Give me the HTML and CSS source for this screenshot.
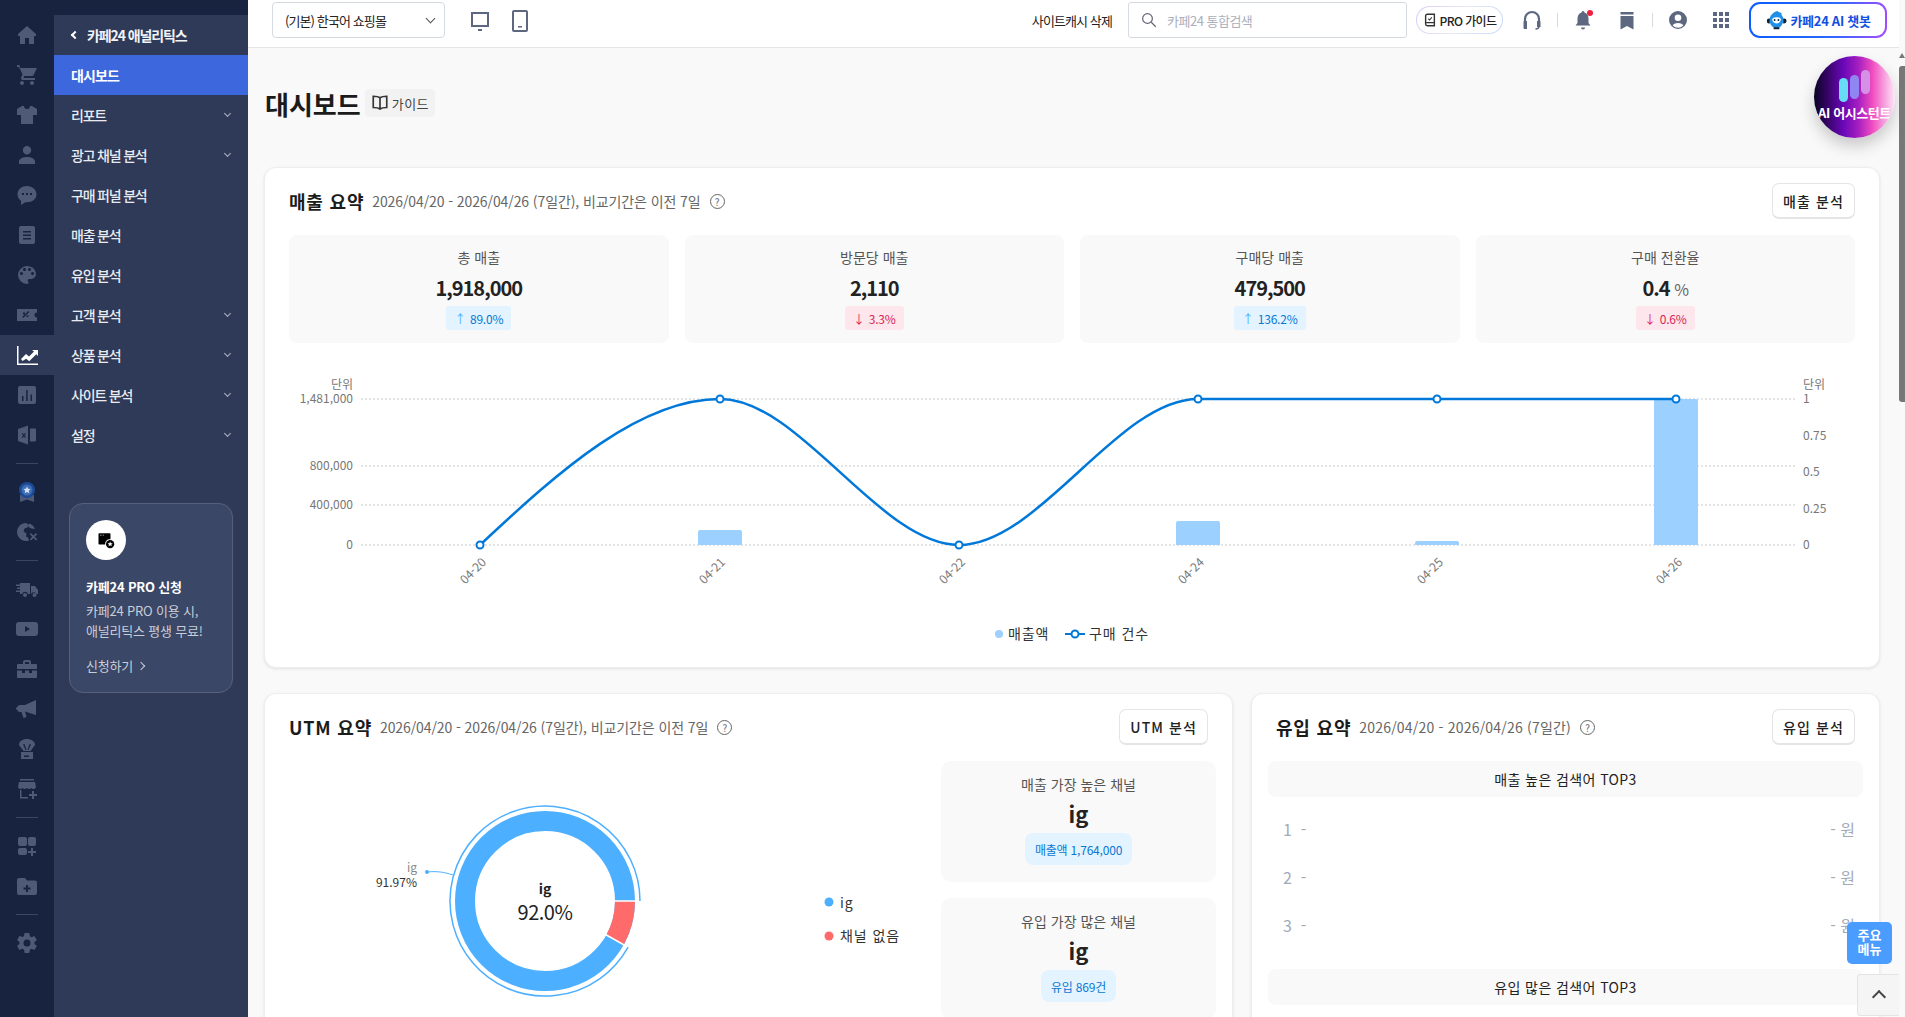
FILE: index.html
```html
<!DOCTYPE html>
<html lang="ko">
<head>
    <meta charset="UTF-8">
    <title>대시보드</title>
    <link rel="stylesheet" href="styles.css">
</head>
<body>
    <nav class="rail">
        <a class="rail-item"><svg viewBox="0 0 24 24"><path d="M12 3 3 11v2h2v8h5v-6h4v6h5v-8h2v-2z"/></svg></a>
        <a class="rail-item"><svg viewBox="0 0 24 24"><path d="M7 18c-1.100 0-2 .9-2 2s.9 2 2 2 2-.9 2-2-.9-2-2-2zM2 2v2h2l3.600 7.600-1.400 2.400c-.7 1.400.3 3 1.800 3h12v-2H8.400l1-2h7.500c.7 0 1.400-.4 1.700-1L22 5H5.300l-.9-3zm15 16c-1.100 0-2 .9-2 2s.9 2 2 2 2-.9 2-2-.9-2-2-2z"/></svg></a>
        <a class="rail-item"><svg viewBox="0 0 24 24"><path d="M7 3 2 6v6h4v9h12v-9h4V6l-5-3h-2a3 3 0 0 1-6 0z"/></svg></a>
        <a class="rail-item"><svg viewBox="0 0 24 24"><path d="M12 11.500a4.200 4.200 0 1 0 0-8.400 4.200 4.200 0 0 0 0 8.400zM12 14c-4.500 0-8 2-8 4.500V21h16v-2.500C20 16 16.500 14 12 14z"/></svg></a>
        <a class="rail-item"><svg viewBox="0 0 24 24"><path fill-rule="evenodd" d="M12 3c-5.500 0-9.500 3.500-9.500 8.300 0 2.700 1.300 5 3.500 6.500V22l4.300-2.800c.5.100 1.100.1 1.700.1 5.500 0 9.500-3.500 9.500-8S17.500 3 12 3zM7 10h2v2H7zm4 0h2v2h-2zm4 0h2v2h-2z"/></svg></a>
        <a class="rail-item"><svg viewBox="0 0 24 24"><path fill-rule="evenodd" d="M6 3h12a2 2 0 0 1 2 2v14a2 2 0 0 1-2 2H6a2 2 0 0 1-2-2V5a2 2 0 0 1 2-2zm2 5v1.500h8V8zm0 3.500V13h8v-1.500zM8 15v1.500h8V15z"/></svg></a>
        <a class="rail-item"><svg viewBox="0 0 24 24"><path d="M12 3a9 9 0 0 0 0 18c.830 0 1.500-.670 1.500-1.500 0-.390-.150-.740-.390-1.010-.230-.260-.380-.610-.380-.990 0-.830.670-1.500 1.500-1.500H16c2.760 0 5-2.240 5-5 0-4.420-4.030-8-9-8zm-5.500 9c-.830 0-1.500-.670-1.500-1.500S5.670 9 6.500 9 8 9.670 8 10.500 7.330 12 6.500 12zm3-4C8.670 8 8 7.330 8 6.500S8.670 5 9.500 5s1.500.670 1.500 1.500S10.330 8 9.500 8zm5 0c-.830 0-1.500-.670-1.500-1.500S13.670 5 14.500 5s1.500.670 1.500 1.500S15.330 8 14.500 8zm3 4c-.830 0-1.500-.670-1.500-1.500S16.670 9 17.500 9s1.500.670 1.500 1.500-.670 1.500-1.500 1.500z"/></svg></a>
        <a class="rail-item"><svg viewBox="0 0 24 24"><path fill-rule="evenodd" d="M2 6h20v3.500a2.500 2.500 0 0 0 0 5V18H2zm6 3.500v2h2v-2zm3.500 4.500v-1.500h2V14zm-3.300 1 6.100-6-1-.9-6.100 6z"/></svg></a>
        <a class="rail-item active"><svg viewBox="0 0 24 24"><path d="M2 3h1.500v17.500H23V22H2zM6 16l5-5 3 2.500 5-5-2-1.500h6v6l-1.700-1.800-7.100 7-3-2.500L7.500 18z"/></svg></a>
        <a class="rail-item"><svg viewBox="0 0 24 24"><path fill-rule="evenodd" d="M5 3h14a2 2 0 0 1 2 2v14a2 2 0 0 1-2 2H5a2 2 0 0 1-2-2V5a2 2 0 0 1 2-2zm2 10v5h1.500v-5zm4.200-6v11h1.500V7zm4.300 4.500V18H17v-6.500z"/></svg></a>
        <a class="rail-item"><svg viewBox="0 0 24 24"><path fill-rule="evenodd" d="M3 6l10-3.500v19L3 18zm4.500 4-.8.800 1.400 1.700-1.400 1.700.8.800 1.300-1.500 1.300 1.500.8-.8-1.400-1.700 1.400-1.700-.8-.8-1.300 1.500zM15 5.500h5a1 1 0 0 1 1 1v11a1 1 0 0 1-1 1h-5z"/></svg></a>
        <div class="rail-line"></div>
        <a class="rail-item"><svg viewBox="0 0 24 24"><path fill="#4e5a76" d="M5 15h14v7l-7-2.500L5 22z"/><circle cx="12" cy="10" r="8" fill="#1d4a94"/><circle cx="12" cy="10" r="5.500" fill="#3f6db5"/><path fill="#cfe0f5" d="m12 6.500 1.100 2.300 2.500.3-1.800 1.700.5 2.500-2.300-1.200-2.300 1.200.5-2.500-1.800-1.700 2.500-.3z"/></svg></a>
        <a class="rail-item"><svg viewBox="0 0 24 24"><path d="M11 3a9 9 0 1 0 3 17.500l-1-3-2-1 .5-3-3-2 1-3 3-1 1-3zm3 .5-1 3 3 2 4 .5a9 9 0 0 0-6-5.500z"/><path d="m16 13 2.500 2.500L21 13l1.200 1.200-2.500 2.500 2.500 2.500-1.200 1.200-2.500-2.500-2.500 2.500-1.200-1.200 2.500-2.500-2.500-2.500z"/></svg></a>
        <div class="rail-line"></div>
        <a class="rail-item"><svg viewBox="0 0 24 24"><path d="M5 6h10v11h-2a3 3 0 0 0-5.800 0H5v-2H1v-1.500h4V12H2v-1.500h3V9H1V7.500h4zm11 3h4l3 4v4h-1.500a3 3 0 0 0-5.500 0zM10 16a2 2 0 1 1 0 4 2 2 0 0 1 0-4zm9.500 0a2 2 0 1 1 0 4 2 2 0 0 1 0-4z"/></svg></a>
        <a class="rail-item"><svg viewBox="0 0 24 24"><path fill-rule="evenodd" d="M4 5h16a3 3 0 0 1 3 3v8a3 3 0 0 1-3 3H4a3 3 0 0 1-3-3V8a3 3 0 0 1 3-3zm6 4v6l5-3z"/></svg></a>
        <a class="rail-item"><svg viewBox="0 0 24 24"><path fill-rule="evenodd" d="M8 7V5a2 2 0 0 1 2-2h4a2 2 0 0 1 2 2v2h5a1 1 0 0 1 1 1v4H2V8a1 1 0 0 1 1-1zm2-2v2h4V5zM2 13.500h5V16h3v-2.500h4V16h3v-2.500h5V20a1 1 0 0 1-1 1H3a1 1 0 0 1-1-1z"/></svg></a>
        <a class="rail-item"><svg viewBox="0 0 24 24"><path d="M21 3v15l-11-3.500 1.500 5.500-3 1-2-6H5a3 3 0 0 1-3-2.500H1v-2h1A3 3 0 0 1 5 8h5z"/></svg></a>
        <a class="rail-item"><svg viewBox="0 0 24 24"><path fill-rule="evenodd" d="M12 2c-4.500 0-8 2.500-8 6l4.500 6h7L20 8c0-3.500-3.500-6-8-6zM8 7.500l2.500 5.500h1L9.500 7zm8 0-2.500 5.500h-1L14.500 7zM6 15h12v7H6zm3 3.500V20h5v-1.500z"/></svg></a>
        <a class="rail-item"><svg viewBox="0 0 24 24"><path d="M5 2h14v1.500H5zM4 5h16l1 5a2.500 2.500 0 0 1-4.500 1 3 3 0 0 1-4.500 0 3 3 0 0 1-4.500 0A2.500 2.500 0 0 1 3 10zm1 8h1.500v7H13v1.500H5zm12 1h2v3h3v2h-3v3h-2v-3h-3v-2h3z"/></svg></a>
        <div class="rail-line"></div>
        <a class="rail-item"><svg viewBox="0 0 24 24"><path d="M5 3h5a2 2 0 0 1 2 2v5a2 2 0 0 1-2 2H5a2 2 0 0 1-2-2V5a2 2 0 0 1 2-2zm10 0h4a2 2 0 0 1 2 2v5a2 2 0 0 1-2 2h-4a2 2 0 0 1-2-2V5a2 2 0 0 1 2-2zM5 14h5a2 2 0 0 1 2 2v3a2 2 0 0 1-2 2H5a2 2 0 0 1-2-2v-3a2 2 0 0 1 2-2zm11 0h2v3h3v2h-3v3h-2v-3h-3v-2h3z"/></svg></a>
        <a class="rail-item"><svg viewBox="0 0 24 24"><path fill-rule="evenodd" d="M4 4h6l2 2.500h8a2 2 0 0 1 2 2V19a2 2 0 0 1-2 2H4a2 2 0 0 1-2-2V6a2 2 0 0 1 2-2zm7 7v2.500H8.500v2H11V18h2v-2.500h2.500v-2H13V11z"/></svg></a>
        <div class="rail-line"></div>
        <a class="rail-item"><svg viewBox="0 0 24 24"><path d="M19.400 13c.040-.330.100-.650.100-1s-.060-.670-.100-1l2.100-1.600c.200-.150.250-.420.120-.650l-2-3.400c-.120-.220-.390-.300-.610-.220l-2.500 1c-.520-.400-1.080-.730-1.690-.980L14.400 2.400c-.040-.240-.250-.420-.500-.420h-4c-.250 0-.460.180-.490.420l-.380 2.650c-.610.250-1.170.590-1.690.980l-2.500-1c-.230-.090-.490 0-.610.220l-2 3.400c-.130.220-.070.490.120.650L4.500 11c-.040.330-.100.660-.100 1s.060.670.100 1l-2.100 1.600c-.200.150-.250.420-.120.650l2 3.400c.120.220.390.300.610.220l2.500-1c.520.400 1.080.730 1.690.980l.380 2.650c.030.240.240.420.490.420h4c.250 0 .460-.180.490-.420l.380-2.650c.610-.250 1.170-.590 1.690-.980l2.500 1c.230.090.490 0 .610-.220l2-3.400c.120-.220.070-.490-.120-.650zM12 15.500a3.500 3.500 0 1 1 0-7 3.500 3.500 0 0 1 0 7z"/></svg></a>
    </nav>

    <aside class="sidenav">
        <div class="nav-title"><i class="nav-back"></i>카페24 애널리틱스</div>
        <a class="nav-item current">대시보드</a>
        <a class="nav-item">리포트<i class="caret"></i></a>
        <a class="nav-item">광고 채널 분석<i class="caret"></i></a>
        <a class="nav-item">구매 퍼널 분석</a>
        <a class="nav-item">매출 분석</a>
        <a class="nav-item">유입 분석</a>
        <a class="nav-item">고객 분석<i class="caret"></i></a>
        <a class="nav-item">상품 분석<i class="caret"></i></a>
        <a class="nav-item">사이트 분석<i class="caret"></i></a>
        <a class="nav-item">설정<i class="caret"></i></a>

        <div class="promo">
            <div class="promo-icon">
                <svg viewBox="0 0 24 24" width="18" height="18"><path d="M3 3h14a1 1 0 0 1 1 1v7a6 6 0 0 0-7 7H3a1 1 0 0 1-1-1V4a1 1 0 0 1 1-1z"/><circle cx="17.500" cy="17.500" r="5.500"/><path fill="#fff" d="m17.500 14 1 2.200 2.400.2-1.800 1.600.6 2.400-2.200-1.300-2.200 1.300.6-2.400-1.800-1.600 2.400-.2zM4 5h1v1H4zm2 0h1v1H6zm2 0h1v1H8z"/></svg>
            </div>
            <div class="promo-title">카페24 PRO 신청</div>
            <p class="promo-desc">카페24 PRO 이용 시,<br>애널리틱스 평생 무료!</p>
            <div class="promo-link">신청하기 <i class="promo-arrow"></i></div>
        </div>
    </aside>

    <div class="main">
        <header class="topbar">
            <div class="shop-select">(기본) 한국어 쇼핑몰<i class="caret dark"></i></div>
            <svg class="device" viewBox="0 0 24 24" width="24" height="24"><path fill="none" stroke="#5d6780" stroke-width="2" d="M4 4h16v13H4z"/><path fill="#5d6780" d="M10 20h4v2h-4z"/></svg>
            <svg class="device" viewBox="0 0 24 24" width="24" height="24"><rect x="5" y="2" width="14" height="20" rx="1" fill="none" stroke="#5d6780" stroke-width="2"/><path fill="#5d6780" d="M10 17h4v1.500h-4z"/></svg>
            <div class="topbar-right">
                <span class="cache-btn">사이트캐시 삭제</span>
                <div class="search">
                    <svg viewBox="0 0 24 24" width="18" height="18"><circle cx="10" cy="10" r="6.500" fill="none" stroke="#667" stroke-width="1.600"/><path stroke="#667" stroke-width="1.600" d="m15 15 6 6"/></svg>
                    <span>카페24 통합검색</span>
                </div>
                <div class="pro-guide">
                    <svg viewBox="0 0 16 16" width="14" height="14"><path fill="none" stroke="#333" stroke-width="1.600" d="M5 1.500h8v13H5a2 2 0 0 1-2-2v-9a2 2 0 0 1 2-2z"/><path stroke="#333" stroke-width="1.200" fill="none" d="M3.500 11h9M6 6.500l1.500 1.500L10 5"/></svg>
                    PRO 가이드
                </div>
                <svg class="tool" viewBox="0 0 24 24" width="24" height="24"><path fill="none" stroke="#5d6780" stroke-width="2.200" d="M5 14v-3a7 7 0 0 1 14 0v3"/><path fill="none" stroke="#5d6780" stroke-width="1.500" d="M19 18c0 2-1.500 3-3.500 3"/><path fill="#5d6780" d="M3.500 14a1 1 0 0 1 1-1H7v8H4.500a1 1 0 0 1-1-1zM17 13h2.500a1 1 0 0 1 1 1v5h-3.500z"/></svg>
                <i class="tool-line"></i>
                <span class="bell">
                    <svg class="tool" viewBox="0 0 24 24" width="24" height="24"><path fill="#5d6780" d="M12 3a1.500 1.500 0 0 1 1.500 1.500c3 1 4 3.500 4 6.500v4l2 2.500h-15l2-2.500v-4c0-3 1-5.500 4-6.500A1.500 1.500 0 0 1 12 3zM10 19.500h4a2 2 0 0 1-4 0z"/></svg>
                    <i class="bell-dot"></i>
                </span>
                <svg class="tool" viewBox="0 0 24 24" width="24" height="24"><path fill="#5d6780" d="M5.500 4h13v2.500h-13zm0 4h13v13.500L12 18l-6.500 3.500z"/></svg>
                <i class="tool-line"></i>
                <svg class="tool person" viewBox="0 0 24 24" width="24" height="24"><path fill="#5d6780" fill-rule="evenodd" d="M12 3a9 9 0 1 1 0 18 9 9 0 0 1 0-18zm0 3.500a3.300 3.300 0 1 0 0 6.600 3.300 3.300 0 0 0 0-6.600zm0 8.500c-2.700 0-4.800 1-5.300 2.500a7.500 7.500 0 0 0 10.600 0C16.800 16 14.700 15 12 15z"/></svg>
                <svg class="tool" viewBox="0 0 24 24" width="24" height="24"><path fill="#5d6780" d="M4 4h4v4H4zm6 0h4v4h-4zm6 0h4v4h-4zM4 10h4v4H4zm6 0h4v4h-4zm6 0h4v4h-4zM4 16h4v4H4zm6 0h4v4h-4zm6 0h4v4h-4z"/></svg>
                <div class="chatbot">
                    <svg viewBox="0 0 24 24" width="23" height="23"><path fill="#1f8fe8" d="M13 2c1 1.500 3 2 4.500 2-.5 1-.5 1.500 0 2.500 1.500 2 2 4 1.500 6.500-.8 4-3.500 7-7 7s-6.500-3-7-7C4 8 7.500 3.500 13 2z"/><path fill="#fff" d="M7.500 11c0-1.500 1.500-2.500 4.500-2.500s4.500 1 4.500 2.500-1.500 4-4.500 4-4.500-2.500-4.500-4z"/><circle cx="10" cy="11.500" r="1" fill="#123"/><circle cx="14" cy="11.500" r="1" fill="#123"/><path fill="#123" d="M2 12a2 2 0 0 1 2-2h1v5H4a2 2 0 0 1-2-2zm17-2h1a2 2 0 0 1 0 5h-1zM9 19h6v2H9z"/></svg>
                    카페24 AI 챗봇
                </div>
            </div>
        </header>

        <div class="content">
            <div class="page-head">
                <h1>대시보드</h1>
                <a class="guide-btn">
                    <svg viewBox="0 0 24 24" width="18" height="18"><path fill="none" stroke="#333" stroke-width="2.200" d="M12 5c-2-1.500-5-2-9-2v15c4 0 7 .5 9 2 2-1.500 5-2 9-2V3c-4 0-7 .5-9 2zm0 0v15"/></svg>
                    가이드
                </a>
            </div>

            <section class="card sales-card">
                <div class="card-head">
                    <h2>매출 요약</h2>
                    <span class="period">2026/04/20 - 2026/04/26 (7일간), 비교기간은 이전 7일</span>
                    <i class="help">?</i>
                    <a class="outline-btn">매출 분석</a>
                </div>
                <div class="stats">
                    <div class="stat">
                        <div class="stat-label">총 매출</div>
                        <div class="stat-value">1,918,000</div>
                        <span class="delta up"><b>↑</b> 89.0%</span>
                    </div>
                    <div class="stat">
                        <div class="stat-label">방문당 매출</div>
                        <div class="stat-value">2,110</div>
                        <span class="delta down"><b>↓</b> 3.3%</span>
                    </div>
                    <div class="stat">
                        <div class="stat-label">구매당 매출</div>
                        <div class="stat-value">479,500</div>
                        <span class="delta up"><b>↑</b> 136.2%</span>
                    </div>
                    <div class="stat">
                        <div class="stat-label">구매 전환율</div>
                        <div class="stat-value">0.4 <small>%</small></div>
                        <span class="delta down"><b>↓</b> 0.6%</span>
                    </div>
                </div>

                <svg class="sales-chart" viewBox="289 375 1566 280" width="1566" height="280">
                    <g class="grid">
                        <path d="M361 399H1796M361 466H1796M361 505H1796M361 545H1796"/>
                    </g>
                    <g fill="#9bd0ff">
                        <path d="M698 545v-13a2 2 0 0 1 2-2h40a2 2 0 0 1 2 2v13z"/>
                        <path d="M1176 545v-22a2 2 0 0 1 2-2h40a2 2 0 0 1 2 2v22z"/>
                        <path d="M1415 545v-2a2 2 0 0 1 2-2h40a2 2 0 0 1 2 2v2z"/>
                        <path d="M1654 545V401a2 2 0 0 1 2-2h40a2 2 0 0 1 2 2v144z"/>
                    </g>
                    <path class="line" d="M480 545C560 470 640 399 720 399C800 399 880 545 959 545C1039 545 1118 399 1198 399H1676"/>
                    <g class="dots">
                        <circle cx="480" cy="545" r="3.500"/>
                        <circle cx="720" cy="399" r="3.500"/>
                        <circle cx="959" cy="545" r="3.500"/>
                        <circle cx="1198" cy="399" r="3.500"/>
                        <circle cx="1437" cy="399" r="3.500"/>
                        <circle cx="1676" cy="399" r="3.500"/>
                    </g>
                    <g class="axis-left">
                        <text x="353" y="389">단위</text>
                        <text x="353" y="403">1,481,000</text>
                        <text x="353" y="470">800,000</text>
                        <text x="353" y="509">400,000</text>
                        <text x="353" y="549">0</text>
                    </g>
                    <g class="axis-right">
                        <text x="1803" y="389">단위</text>
                        <text x="1803" y="403">1</text>
                        <text x="1803" y="440">0.75</text>
                        <text x="1803" y="476">0.5</text>
                        <text x="1803" y="513">0.25</text>
                        <text x="1803" y="549">0</text>
                    </g>
                    <g class="axis-x">
                        <text transform="translate(487 563) rotate(-45)">04-20</text>
                        <text transform="translate(726 563) rotate(-45)">04-21</text>
                        <text transform="translate(966 563) rotate(-45)">04-22</text>
                        <text transform="translate(1205 563) rotate(-45)">04-24</text>
                        <text transform="translate(1444 563) rotate(-45)">04-25</text>
                        <text transform="translate(1683 563) rotate(-45)">04-26</text>
                    </g>
                    <circle cx="999" cy="634" r="4" fill="#9bd0ff"/>
                    <text class="legend-text" x="1008" y="639">매출액</text>
                    <path d="M1065 634h20" stroke="#0078d9" stroke-width="2"/>
                    <circle class="legend-dot" cx="1075" cy="634" r="3.500"/>
                    <text class="legend-text" x="1089" y="639">구매 건수</text>
                </svg>
            </section>

            <div class="bottom-row">
                <section class="card utm-card">
                    <div class="card-head">
                        <h2>UTM 요약</h2>
                        <span class="period">2026/04/20 - 2026/04/26 (7일간), 비교기간은 이전 7일</span>
                        <i class="help">?</i>
                        <a class="outline-btn">UTM 분석</a>
                    </div>
                    <div class="utm-body">
                        <svg class="donut" viewBox="289 761 652 256" width="652" height="256">
                            <circle cx="545" cy="901" r="80" fill="none" stroke="#4dafff" stroke-width="20"/>
                            <path d="M625 901A80 80 0 0 1 615 939.800" fill="none" stroke="#ff6b6b" stroke-width="20"/>
                            <path d="M614 901h22M605.500 934.500 625 945.500" stroke="#fff" stroke-width="1.500"/>
                            <path d="M628.100 947.100A95 95 0 1 1 640 901" fill="none" stroke="#4dafff" stroke-width="1.500"/>
                            <path d="M427 872c10-1 17 0 26 3" fill="none" stroke="#4dafff"/>
                            <circle cx="427" cy="872" r="2" fill="#4dafff"/>
                            <text class="pie-name" x="417" y="872">ig</text>
                            <text class="pie-pct" x="417" y="887">91.97%</text>
                            <text class="center-name" x="545" y="894">ig</text>
                            <text class="center-pct" x="545" y="920">92.0%</text>
                            <circle cx="829" cy="902" r="4.500" fill="#4dafff"/>
                            <text class="legend-text" x="840" y="908">ig</text>
                            <circle cx="829" cy="936" r="4.500" fill="#ff6b6b"/>
                            <text class="legend-text" x="840" y="941">채널 없음</text>
                        </svg>
                        <div class="utm-side">
                            <div class="best">
                                <div class="stat-label">매출 가장 높은 채널</div>
                                <div class="best-name">ig</div>
                                <span class="best-tag">매출액 1,764,000</span>
                            </div>
                            <div class="best">
                                <div class="stat-label">유입 가장 많은 채널</div>
                                <div class="best-name">ig</div>
                                <span class="best-tag">유입 869건</span>
                            </div>
                        </div>
                    </div>
                </section>

                <section class="card inflow-card">
                    <div class="card-head">
                        <h2>유입 요약</h2>
                        <span class="period">2026/04/20 - 2026/04/26 (7일간)</span>
                        <i class="help">?</i>
                        <a class="outline-btn">유입 분석</a>
                    </div>
                    <div class="keywords">
                        <div class="keyword-head">매출 높은 검색어 TOP3</div>
                        <ul class="keyword-list">
                            <li><span>1 &nbsp;-</span><span>- 원</span></li>
                            <li><span>2 &nbsp;-</span><span>- 원</span></li>
                            <li><span>3 &nbsp;-</span><span>- 원</span></li>
                        </ul>
                        <div class="keyword-head">유입 많은 검색어 TOP3</div>
                    </div>
                </section>
            </div>
        </div>

        <a class="ai-assist">
            <span class="ai-bars"><i></i><i></i><i></i></span>
            <span class="ai-text">AI 어시스턴트</span>
        </a>
        <a class="quick-menu">주요<br>메뉴</a>
        <a class="to-top"><i></i></a>
    </div>

    <div class="scrollbar"><i class="scroll-up"></i><i class="scroll-thumb"></i></div>
</body>
</html>
```

FILE: styles.css
```css
* {
    box-sizing: border-box;
}

body {
    margin: 0;
    height: 100vh;
    display: flex;
    overflow: hidden;
    background: #f9f9f9;
    color: #222;
    font-family: "Noto Sans CJK KR", "Noto Sans", sans-serif;
    font-size: 14px;
}

h1, h2, p, ul {
    margin: 0;
    padding: 0;
}

/* left icon rail */
.rail {
    width: 54px;
    flex: none;
    padding-top: 15px;
    background: #17233f;
}

.rail-item {
    height: 40px;
    display: flex;
    align-items: center;
    justify-content: center;
}

.rail-item svg {
    width: 24px;
    height: 24px;
    fill: #4e5a76;
}

.rail-item.active {
    background: #2e3a58;
}

.rail-item.active svg {
    fill: #fff;
}

.rail-line {
    height: 1px;
    margin: 8px 16px;
    background: #3b4662;
}

/* second level menu */
.sidenav {
    width: 194px;
    flex: none;
    padding-top: 15px;
    background: linear-gradient(#17233f 15px, #2e3a58 15px);
}

.nav-title {
    height: 40px;
    display: flex;
    align-items: center;
    padding-left: 16px;
    color: #f1f3f7;
    font-weight: 700;
    letter-spacing: -1.100px;
}

.nav-back {
    width: 6px;
    height: 6px;
    margin: 0 9px 0 2px;
    border-left: 2px solid #fff;
    border-bottom: 2px solid #fff;
    transform: rotate(45deg);
}

.nav-item {
    height: 40px;
    display: flex;
    align-items: center;
    justify-content: space-between;
    padding: 0 17px;
    color: #e9ebf1;
    font-weight: 500;
    letter-spacing: -1.200px;
}

.nav-item.current {
    background: #3c67dd;
    color: #fff;
    font-weight: 700;
    letter-spacing: -0.900px;
}

.caret {
    width: 5px;
    height: 5px;
    margin: -3px 1px 0 0;
    border-right: 1px solid #aeb4c4;
    border-bottom: 1px solid #aeb4c4;
    transform: rotate(45deg);
}

.caret.dark {
    width: 7px;
    height: 7px;
    border-color: #555;
}

.promo {
    height: 190px;
    margin: 48px 15px 0;
    padding: 16px;
    background: #3b4766;
    border: 1px solid #55607f;
    border-radius: 14px;
    color: #c9cdd8;
    font-size: 13px;
    letter-spacing: -0.200px;
}

.promo-icon {
    width: 40px;
    height: 40px;
    display: flex;
    align-items: center;
    justify-content: center;
    background: #fff;
    border-radius: 50%;
}

.promo-title {
    margin-top: 17px;
    color: #fff;
    font-weight: 700;
    line-height: 20px;
    letter-spacing: -0.200px;
}

.promo-desc {
    margin-top: 4px;
    line-height: 20px;
}

.promo-link {
    margin-top: 15px;
    line-height: 20px;
}

.promo-arrow {
    display: inline-block;
    width: 6px;
    height: 6px;
    margin: 0 0 2px 2px;
    border-top: 1px solid #c9cdd8;
    border-right: 1px solid #c9cdd8;
    transform: rotate(45deg);
}

/* main column */
.main {
    flex: 1;
    min-width: 0;
    display: flex;
    flex-direction: column;
    position: relative;
}

.topbar {
    height: 48px;
    flex: none;
    display: flex;
    align-items: flex-start;
    padding: 2px 12px 0 24px;
    background: #fff;
    border-bottom: 1px solid #e2e4e8;
}

.shop-select {
    width: 173px;
    height: 36px;
    display: flex;
    align-items: center;
    justify-content: space-between;
    padding: 0 9px 0 12px;
    background: #fff;
    border: 1px solid #d5d9e2;
    border-radius: 4px;
    font-size: 13px;
    letter-spacing: -0.900px;
}

.device {
    margin: 7px 0 0 23px;
}

.device + .device {
    margin-left: 16px;
}

.topbar-right {
    margin-left: auto;
    display: flex;
    align-items: center;
    height: 36px;
}

.cache-btn {
    margin-right: 16px;
    font-size: 13px;
    letter-spacing: -0.900px;
}

.search {
    width: 279px;
    height: 36px;
    display: flex;
    align-items: center;
    gap: 9px;
    padding: 0 11px;
    border: 1px solid #d5d9e2;
    border-radius: 3px;
    color: #aab0bd;
    font-size: 13px;
    letter-spacing: -0.500px;
}

.pro-guide {
    width: 87px;
    height: 28px;
    margin: 0 17px 0 9px;
    display: flex;
    align-items: center;
    justify-content: center;
    gap: 3px;
    border: 1px solid transparent;
    border-radius: 14px;
    background: linear-gradient(#fff, #fff) padding-box, linear-gradient(120deg, #d9c8f5, #e8ebf2, #c5d6fb) border-box;
    font-size: 12px;
    font-weight: 500;
    letter-spacing: -0.600px;
}

.tool-line {
    width: 1px;
    height: 14px;
    margin: 0 13px;
    background: #d8dade;
}

.bell {
    position: relative;
    height: 24px;
    margin-right: 20px;
}

.bell-dot {
    position: absolute;
    top: 2px;
    right: 2px;
    width: 6px;
    height: 6px;
    background: #f0213f;
    border-radius: 50%;
}

.person {
    margin-right: 19px;
}

.chatbot {
    width: 138px;
    height: 36px;
    margin-left: 16px;
    display: flex;
    align-items: center;
    justify-content: center;
    gap: 2px;
    border: 2px solid transparent;
    border-radius: 11px;
    background: linear-gradient(#fff, #fff) padding-box, linear-gradient(100deg, #0a5cff, #2a68ff 60%, #a64bff) border-box;
    color: #1450e0;
    font-size: 13px;
    font-weight: 700;
    letter-spacing: -0.300px;
}

.content {
    flex: 1;
    min-height: 0;
    padding: 41px 19px 0 16px;
    overflow: hidden;
}

.page-head {
    height: 28px;
    display: flex;
    align-items: center;
    gap: 4px;
    padding-left: 1px;
}

h1 {
    font-size: 26px;
    font-weight: 700;
    color: #1b1b1b;
}

.guide-btn {
    height: 28px;
    display: flex;
    align-items: center;
    gap: 3px;
    padding: 0 6px;
    background: #f2f2f2;
    border-radius: 4px;
    font-size: 13px;
    letter-spacing: 0.500px;
    color: #444;
}

.card {
    padding: 15px 24px 0;
    background: #fff;
    border: 1px solid #eceef0;
    border-radius: 12px;
    box-shadow: 0 1px 3px rgba(0, 0, 0, 0.1);
}

.sales-card {
    height: 501px;
    margin-top: 50px;
}

.card-head {
    height: 36px;
    display: flex;
    align-items: center;
}

h2 {
    font-size: 18px;
    font-weight: 700;
    color: #1b1b1b;
    margin-right: 8px;
    letter-spacing: 0.800px;
}

.period {
    color: #666;
    font-size: 14px;
    letter-spacing: -0.100px;
}

.inflow-card .period {
    letter-spacing: 0.200px;
}

.help {
    width: 15px;
    height: 15px;
    margin-left: 9px;
    display: flex;
    align-items: center;
    justify-content: center;
    border: 1.500px solid #666;
    border-radius: 50%;
    color: #666;
    font-size: 10px;
    font-style: normal;
}

.outline-btn {
    margin-left: auto;
    height: 36px;
    display: flex;
    align-items: center;
    padding: 0 10px;
    background: #fff;
    border: 1px solid #e5e5e5;
    border-bottom-width: 2px;
    border-radius: 7px;
    font-weight: 500;
    letter-spacing: 1.100px;
    color: #222;
}

.stats {
    margin-top: 16px;
    display: grid;
    grid-template-columns: repeat(4, 1fr);
    gap: 16px;
}

.stat {
    height: 108px;
    padding-top: 12px;
    display: flex;
    flex-direction: column;
    align-items: center;
    background: #f9f9f9;
    border-radius: 8px;
}

.stat-label {
    line-height: 20px;
    color: #555;
    font-size: 14px;
}

.stat-value {
    margin-top: 7px;
    height: 27px;
    line-height: 27px;
    font-size: 20px;
    font-weight: 700;
    letter-spacing: -1px;
    color: #222;
}

.stat-value small {
    font-size: 16px;
    font-weight: 400;
    color: #666;
}

.delta {
    margin-top: 5px;
    height: 24px;
    display: flex;
    align-items: center;
    gap: 4px;
    padding: 0 8px;
    border-radius: 3px;
    font-size: 12px;
    letter-spacing: -0.200px;
}

.delta b {
    font-weight: 400;
}

.delta.up {
    background: #e3f3ff;
    color: #0a78d0;
}

.delta.up b {
    color: #4dafff;
}

.delta.down {
    background: #fde6ec;
    color: #d92659;
}

.sales-chart {
    display: block;
    margin-top: 32px;
}

.grid path {
    fill: none;
    stroke: #dcdcdc;
    stroke-width: 1.500;
    stroke-dasharray: 2 2;
}

.line {
    fill: none;
    stroke: #0078d9;
    stroke-width: 2.500;
}

.dots circle, .legend-dot {
    fill: #fff;
    stroke: #0078d9;
    stroke-width: 2;
}

.sales-chart text {
    font-size: 12px;
    fill: #777;
}

.axis-left text {
    text-anchor: end;
}

.axis-x text {
    text-anchor: end;
}

.sales-chart .legend-text, .legend-text {
    font-size: 14px;
    letter-spacing: 0.900px;
    fill: #333;
}

.bottom-row {
    margin-top: 25px;
    display: grid;
    grid-template-columns: 969px 629px;
    gap: 18px;
}

.utm-card, .inflow-card {
    height: 400px;
}

.utm-body {
    margin: 16px -8px 0 0;
    display: flex;
}

.donut {
    display: block;
    flex: none;
}

.donut text {
    text-anchor: end;
}

.donut .legend-text {
    text-anchor: start;
}

.pie-name {
    font-size: 12px;
    fill: #888;
}

.pie-pct {
    font-size: 12px;
    fill: #333;
}

.donut .center-name {
    text-anchor: middle;
    font-size: 14px;
    font-weight: 700;
    fill: #222;
}

.donut .center-pct {
    text-anchor: middle;
    font-size: 20px;
    letter-spacing: -0.500px;
    fill: #222;
}

.utm-side {
    flex: 1;
    display: flex;
    flex-direction: column;
    gap: 16px;
}

.best {
    height: 121px;
    flex: none;
    padding-top: 13px;
    display: flex;
    flex-direction: column;
    align-items: center;
    background: #f9f9f9;
    border-radius: 10px;
}

.best-name {
    margin-top: 5px;
    line-height: 28px;
    font-size: 22px;
    font-weight: 700;
}

.best-tag {
    margin-top: 6px;
    height: 32px;
    display: flex;
    align-items: center;
    padding: 0 10px;
    background: #e3f3ff;
    border-radius: 8px;
    color: #0a78d0;
    font-size: 12px;
    letter-spacing: -0.200px;
}

.keywords {
    margin: 16px -8px 0;
}

.keyword-head {
    height: 36px;
    display: flex;
    align-items: center;
    justify-content: center;
    background: #f9f9f9;
    border-radius: 8px;
    color: #222;
    font-size: 14px;
    letter-spacing: 0.400px;
}

.keyword-list {
    list-style: none;
    margin: 8px 0 20px;
}

.keyword-list li {
    height: 48px;
    display: flex;
    align-items: center;
    justify-content: space-between;
    padding: 0 8px 0 15px;
    color: #a3abb9;
    font-size: 16px;
}

/* floating things */
.ai-assist {
    position: absolute;
    top: 56px;
    right: 4px;
    width: 81px;
    height: 82px;
    border-radius: 50%;
    background: linear-gradient(90deg, #0a0222, #6a07b8 36%, #a71fc0 55%, #f04cc0 72%, #fde8f7);
    box-shadow: 0 8px 16px rgba(0, 0, 0, 0.2);
    overflow: hidden;
    color: #fff;
}

.ai-bars {
    display: flex;
    justify-content: center;
    gap: 2px;
    margin-top: 14px;
}

.ai-bars i {
    width: 9px;
    height: 24px;
    border-radius: 5px;
    background: #66dcf5;
    margin-top: 8px;
}

.ai-bars i:nth-child(2) {
    background: #8f86f2;
    margin-top: 5px;
}

.ai-bars i:nth-child(3) {
    background: #d591e6;
    margin-top: 0;
}

.ai-text {
    display: block;
    margin-top: 3px;
    white-space: nowrap;
    text-align: center;
    font-size: 13px;
    font-weight: 700;
    letter-spacing: -0.400px;
    line-height: 16px;
}

.quick-menu {
    position: absolute;
    top: 922px;
    right: 7px;
    width: 45px;
    height: 42px;
    padding-top: 6px;
    background: #4a9cff;
    border-radius: 5px;
    color: #fff;
    text-align: center;
    font-size: 13px;
    font-weight: 700;
    line-height: 14px;
}

.to-top {
    position: absolute;
    top: 974px;
    right: -2px;
    width: 44px;
    height: 42px;
    display: flex;
    align-items: center;
    justify-content: center;
    background: #f5f5f5;
    border: 1px solid #e4e4e4;
    border-radius: 3px;
}

.to-top i {
    width: 10px;
    height: 10px;
    margin-top: 3px;
    border-top: 2.500px solid #444;
    border-left: 2.500px solid #444;
    transform: rotate(45deg);
}

.scrollbar {
    width: 6px;
    flex: none;
    position: relative;
    z-index: 2;
    background: #f9f9f9;
}

.scroll-up {
    position: absolute;
    top: 53px;
    left: 0;
    border-left: 3px solid transparent;
    border-right: 3px solid transparent;
    border-bottom: 5px solid #777;
}

.scroll-thumb {
    position: absolute;
    top: 66px;
    left: 0;
    width: 6px;
    height: 336px;
    background: #777;
    border-radius: 3px 0 0 3px;
}
```
